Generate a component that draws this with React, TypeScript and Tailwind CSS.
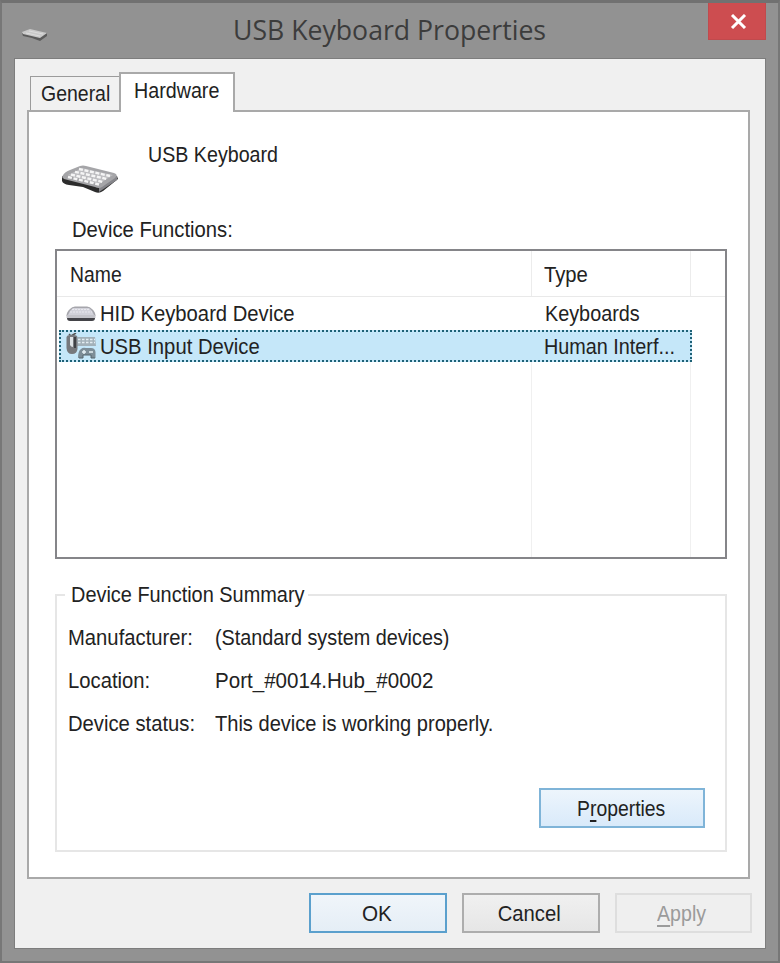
import { useState } from 'react'
import type { ReactNode } from 'react'

interface DeviceFunction {
  name: string
  type: string
  icon: ReactNode
}

// ── Text ─────────────────────────────────────────────────────────────────────

/** Dialog text, set slightly condensed */
function Label({
  children,
  className = 'origin-left scale-x-[0.92]',
}: {
  children: ReactNode
  className?: string
}) {
  return <span className={`inline-block whitespace-nowrap ${className}`}>{children}</span>
}

// ── Icons ────────────────────────────────────────────────────────────────────

function KeyboardIcon({ className }: { className: string }) {
  return (
    <svg className={className} viewBox="0 0 58 30">
      <path d="M1 11 L1 16 Q2 19 8 20 L22 22 L34 27 Q38 29 42 26 L57 14 L56 11 L38 19 Z" fill="#2c2c2c" />
      <path d="M38 27 L56 15 L56 11 L38 21 Z" fill="#85858a" />
      <path d="M1 12 Q3 7 9 5 L19 1 Q22 0 25 1 L53 8 Q58 10 54 13 L41 22 Q38 24 34 22 L3 14 Z" fill="#a5a5a8" />
      <path d="M7 10 L21 3 L52 10 L38 19 Z" fill="#bdbdc0" />
      <g stroke="#f5f5f5" strokeWidth="2.4" strokeDasharray="4 1.6">
        <path d="M18 4 L49 11" />
        <path d="M14 6.8 L46 14" />
        <path d="M10 9.6 L42 17" />
        <path d="M7 12 L38 19.5" />
      </g>
    </svg>
  )
}

function TitleIcon() {
  return (
    <svg className="h-4 w-7" viewBox="0 0 28 16">
      <path d="M1 6 L2 9 L11 11 L19 14 L26 9 L26 6 L18 9 Z" fill="#5b5b5b" />
      <path d="M1 5 L9 2 L26 6 L19 11 L2 7 Z" fill="#c9c9c9" />
      <path d="M8 4 L22 7 M5 6 L19 9" stroke="#dcdcdc" strokeWidth="1" />
    </svg>
  )
}

function SmallKeyboardIcon() {
  return (
    <svg className="h-[18px] w-[30px]" viewBox="0 0 30 18">
      <path d="M0.500 11 Q0.500 7 4 4 Q6 1.500 9 1.500 H21 Q24 1.500 26 4 Q29.500 7 29.500 11 Z" fill="#a6a6ac" />
      <path d="M2 10 Q3 6 7 3 H23 Q27 6 28 10 Z" fill="#d2d2da" />
      <path d="M6 4.500 H24 M4 7 H26" stroke="#e8e8ee" strokeDasharray="2 1" />
      <path d="M0.500 10 H29.500 V13 H0.500 Z" fill="#c4c4ca" />
      <path d="M1 13 H29 Q29 16 26 16 H4 Q1 16 1 13 Z" fill="#434348" />
    </svg>
  )
}

function InputDeviceIcon() {
  return (
    <svg className="h-[28px] w-[30px]" viewBox="0 0 30 28">
      {/* keyboard */}
      <path d="M12 4 H29 L30 13 H11 Z" fill="#a3b1b9" />
      <path d="M12 6.500 H29 M12 9.500 H29" stroke="#e4edf2" strokeWidth="1.500" strokeDasharray="2.500 1.500" />
      {/* mouse */}
      <path d="M3 1 L5 3 L10 0" fill="none" stroke="#555" strokeWidth="1.500" />
      <path d="M0.500 4 Q1 2 4 2 H8 Q11 2 11.500 4 V16 Q11 21 6 21 Q1 21 0.500 15 Z" fill="#77797d" />
      <path d="M4 4 H7 V14 Q5 14 4 12 Z" fill="#dfe4e7" />
      <path d="M9 4 V15" stroke="#404246" strokeWidth="2" />
      {/* gamepad */}
      <path d="M12 25 Q12 18 15 16 Q17 14 20 15 H25 Q29 15 29.500 19 V25 H25 V22 H17 V25 Z" fill="#7d8d97" />
      <path d="M13 25 H17 V22 H25 V25 H29" fill="none" stroke="#56646d" />
      <path d="M16 19 H20 M18 17 V21 M23 19 H27" stroke="#e5eff4" strokeWidth="1.500" />
    </svg>
  )
}

// ── Data ─────────────────────────────────────────────────────────────────────

const FUNCTIONS: DeviceFunction[] = [
  { name: 'HID Keyboard Device', type: 'Keyboards', icon: <SmallKeyboardIcon /> },
  { name: 'USB Input Device', type: 'Human Interf...', icon: <InputDeviceIcon /> },
]

const SUMMARY = [
  { label: 'Manufacturer:', value: '(Standard system devices)', fit: 'origin-left scale-x-[0.9]' },
  { label: 'Location:', value: 'Port_#0014.Hub_#0002', fit: 'origin-left scale-x-[0.935]' },
  { label: 'Device status:', value: 'This device is working properly.', fit: 'origin-left scale-x-[0.912]' },
]

// ── Sections ─────────────────────────────────────────────────────────────────

function TitleBar() {
  return (
    <div className="flex h-[55px] items-start">
      <div className="w-[231px] pt-[24px] pl-[19px]">
        <TitleIcon />
      </div>
      <h1 className="flex-1 pt-[9px] font-['Open_Sans','Noto_Sans',sans-serif] text-[27px] leading-9 text-[#3c3c3c]">
        <Label className="origin-left scale-x-[0.987]">USB Keyboard Properties</Label>
      </h1>
      <button
        aria-label="Close"
        className="mr-[12px] flex h-[37px] w-[58px] items-center justify-center border border-t-0 border-[#c04a4d] bg-[#cd4d50]"
      >
        <svg className="ml-0.5 h-[15px] w-[17px]" viewBox="0 0 17 15">
          <path d="M2 1 L15 14 M15 1 L2 14" stroke="#fff" strokeWidth="3" />
        </svg>
      </button>
    </div>
  )
}

function FunctionList() {
  const [selected, setSelected] = useState(1)

  return (
    <div className="flex h-[310px] flex-col border-2 border-[#858589] bg-white">
      <div className="flex h-[46px] border-b border-[#e9e9e9] pl-[3px] leading-[48px]">
        <div className="w-[472px] border-r border-[#ececec] pl-[10px]">
          <Label className="origin-left scale-x-[0.88]">Name</Label>
        </div>
        <div className="w-[159px] border-r border-[#ececec] pl-[12px]">
          <Label>Type</Label>
        </div>
      </div>
      {FUNCTIONS.map((fn, i) => (
        <div
          key={fn.name}
          onClick={() => setSelected(i)}
          className={`ml-[2px] flex w-[633px] items-center border-2 pt-px ${
            i === selected
              ? 'h-[32px] border-dotted border-[#1d6176] bg-[#c5e7f9]'
              : 'h-[33px] border-transparent'
          }`}
        >
          <div className="flex w-[472px] items-center pl-[5px]">
            <span className="mr-[4px] flex w-[30px] items-center">{fn.icon}</span>
            <Label>{fn.name}</Label>
          </div>
          <div className="flex h-full flex-1 items-center pl-[12px]">
            <Label className="origin-left scale-x-[0.9]">{fn.type}</Label>
          </div>
        </div>
      ))}
      <div className="flex flex-1 pl-[3px]">
        <div className="w-[472px] border-r border-[#f0f0f0]" />
        <div className="w-[159px] border-r border-[#f0f0f0]" />
      </div>
    </div>
  )
}

function Summary() {
  return (
    <fieldset className="mt-[21px] h-[272px] border-2 border-[#e6e6e6] pl-[11px]">
      <legend className="ml-[-3px] w-[243px] pl-[6px] leading-[30px]">
        <Label className="origin-left scale-x-[0.905]">Device Function Summary</Label>
      </legend>
      <dl className="mt-[6px]">
        {SUMMARY.map((row) => (
          <div key={row.label} className="flex h-[43px] leading-[43px]">
            <dt className="w-[147px]">
              <Label>{row.label}</Label>
            </dt>
            <dd>
              <Label className={row.fit}>{row.value}</Label>
            </dd>
          </div>
        ))}
      </dl>
      <div className="mt-[43px] flex justify-end pr-[20px]">
        <button className="h-10 w-[166px] border-2 border-[#7fb4d8] bg-gradient-to-b from-[#edf5fc] to-[#d9eafa] pt-px pr-[2px]">
          <Label className="origin-center scale-x-[0.88]">
            P<span className="underline underline-offset-4">r</span>operties
          </Label>
        </button>
      </div>
    </fieldset>
  )
}

export default function App() {
  return (
    <div className="h-[963px] w-[780px] overflow-hidden border-x-2 border-t-[3px] border-b-2 border-[#777] border-t-[#717171] bg-[#929292] font-['Liberation_Sans',Arial,sans-serif] text-[22px] leading-none text-[#222]">
      <TitleBar />
      <div className="mx-[12px] h-[891px] w-[752px] border border-[#7d7d7d] bg-[#f0f0f0] pt-[13px]">
        <div className="ml-[15px] flex h-[38px] items-end">
          <button className="h-[34px] w-[89px] border border-r-0 border-b-0 border-[#9b9b9b] bg-[#f1f1f1] pl-[10px] text-left">
            <Label className="origin-left scale-x-[0.885]">General</Label>
          </button>
          <button className="relative z-10 -mb-[2px] h-[40px] w-[116px] border-2 border-b-0 border-[#a9a9a9] bg-white pb-[4px] pl-[13px] text-left">
            <Label className="origin-left scale-x-[0.895]">Hardware</Label>
          </button>
        </div>
        <div className="ml-[12px] h-[769px] w-[723px] border-2 border-[#a9a9a9] bg-white pr-[21px] pl-[26px]">
          <div className="flex h-[103px]">
            <KeyboardIcon className="mt-[53px] ml-[6px] h-[30px] w-[58px]" />
            <div className="pt-[32px] pl-[29px]">
              <Label className="origin-left scale-x-[0.893]">USB Keyboard</Label>
            </div>
          </div>
          <div className="h-[34px] pt-[4px] pl-[17px]">
            <Label>Device Functions:</Label>
          </div>
          <FunctionList />
          <Summary />
        </div>
        <div className="mt-[14px] ml-[294px] flex gap-[15px]">
          <button className="h-10 w-[138px] border-2 border-[#5ba0cd] bg-gradient-to-b from-[#f0f5fa] to-[#e5eef6] pt-px pr-[2px]">
            <Label className="origin-center scale-x-[0.94]">OK</Label>
          </button>
          <button className="h-10 w-[138px] border-2 border-[#adadad] bg-gradient-to-b from-[#f0f0f0] to-[#e6e6e6] pt-px pr-[4px]">
            <Label className="origin-center scale-x-[0.92]">Cancel</Label>
          </button>
          <button disabled className="h-10 w-[137px] border-2 border-[#dedede] bg-[#efefef] pt-px pr-[4px] text-[#9b9b9b]">
            <Label className="origin-center scale-x-[0.89]">
              <span className="underline underline-offset-4">A</span>pply
            </Label>
          </button>
        </div>
      </div>
    </div>
  )
}
